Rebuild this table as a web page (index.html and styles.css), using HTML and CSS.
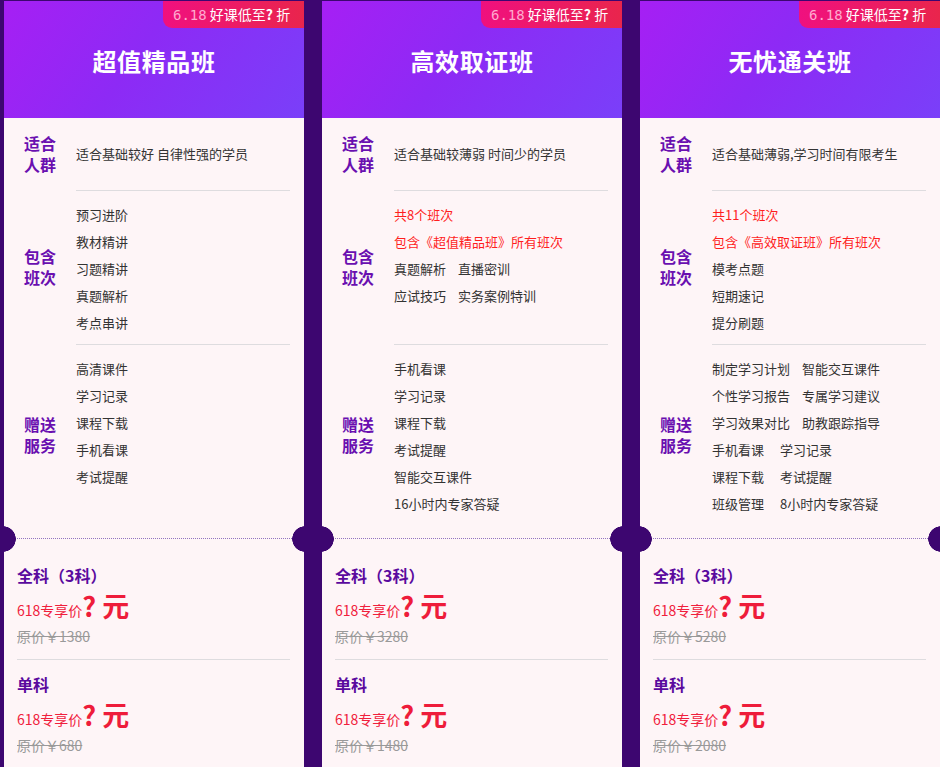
FILE: index.html
```html
<!DOCTYPE html>
<html lang="zh-CN">
<head>
<meta charset="utf-8">
<title>618 班型</title>
<link rel="stylesheet" href="styles.css">
</head>
<body>
<div class="page">
  <div class="card">
    <div class="head">
      <span class="badge"><span class="num">6.18</span> 好课低至<b>?</b> 折</span>
      <h2 class="title">超值精品班</h2>
    </div>
    <div class="info">
      <div class="row r1">
        <div class="label"><span class="ln">适合</span><span class="ln">人群</span></div>
        <div class="content"><p class="item">适合基础较好 自律性强的学员</p></div>
      </div>
      <div class="row r2">
        <div class="label"><span class="ln">包含</span><span class="ln">班次</span></div>
        <div class="content lined">
          <p class="item">预习进阶</p>
          <p class="item">教材精讲</p>
          <p class="item">习题精讲</p>
          <p class="item">真题解析</p>
          <p class="item">考点串讲</p>
        </div>
      </div>
      <div class="row r3">
        <div class="label"><span class="ln">赠送</span><span class="ln">服务</span></div>
        <div class="content lined">
          <p class="item">高清课件</p>
          <p class="item">学习记录</p>
          <p class="item">课程下载</p>
          <p class="item">手机看课</p>
          <p class="item">考试提醒</p>
        </div>
      </div>
    </div>
    <div class="cut"></div>
    <div class="prices">
      <div class="price">
        <div class="ptitle">全科（3科）</div>
        <div class="pnow">618专享价<b class="big">? 元</b></div>
        <div class="pold">原价￥1380</div>
      </div>
      <div class="price">
        <div class="ptitle">单科</div>
        <div class="pnow">618专享价<b class="big">? 元</b></div>
        <div class="pold">原价￥680</div>
      </div>
    </div>
  </div>

  <div class="card">
    <div class="head">
      <span class="badge"><span class="num">6.18</span> 好课低至<b>?</b> 折</span>
      <h2 class="title">高效取证班</h2>
    </div>
    <div class="info">
      <div class="row r1">
        <div class="label"><span class="ln">适合</span><span class="ln">人群</span></div>
        <div class="content"><p class="item">适合基础较薄弱 时间少的学员</p></div>
      </div>
      <div class="row r2">
        <div class="label"><span class="ln">包含</span><span class="ln">班次</span></div>
        <div class="content lined">
          <p class="item red">共8个班次</p>
          <p class="item red">包含《超值精品班》所有班次</p>
          <p class="item"><span class="sp">真题解析</span>直播密训</p>
          <p class="item"><span class="sp">应试技巧</span>实务案例特训</p>
        </div>
      </div>
      <div class="row r3">
        <div class="label"><span class="ln">赠送</span><span class="ln">服务</span></div>
        <div class="content lined">
          <p class="item">手机看课</p>
          <p class="item">学习记录</p>
          <p class="item">课程下载</p>
          <p class="item">考试提醒</p>
          <p class="item">智能交互课件</p>
          <p class="item">16小时内专家答疑</p>
        </div>
      </div>
    </div>
    <div class="cut"></div>
    <div class="prices">
      <div class="price">
        <div class="ptitle">全科（3科）</div>
        <div class="pnow">618专享价<b class="big">? 元</b></div>
        <div class="pold">原价￥3280</div>
      </div>
      <div class="price">
        <div class="ptitle">单科</div>
        <div class="pnow">618专享价<b class="big">? 元</b></div>
        <div class="pold">原价￥1480</div>
      </div>
    </div>
  </div>

  <div class="card">
    <div class="head">
      <span class="badge"><span class="num">6.18</span> 好课低至<b>?</b> 折</span>
      <h2 class="title">无忧通关班</h2>
    </div>
    <div class="info">
      <div class="row r1">
        <div class="label"><span class="ln">适合</span><span class="ln">人群</span></div>
        <div class="content"><p class="item">适合基础薄弱,学习时间有限考生</p></div>
      </div>
      <div class="row r2">
        <div class="label"><span class="ln">包含</span><span class="ln">班次</span></div>
        <div class="content lined">
          <p class="item red">共11个班次</p>
          <p class="item red">包含《高效取证班》所有班次</p>
          <p class="item">模考点题</p>
          <p class="item">短期速记</p>
          <p class="item">提分刷题</p>
        </div>
      </div>
      <div class="row r3">
        <div class="label"><span class="ln">赠送</span><span class="ln">服务</span></div>
        <div class="content lined">
          <p class="item"><span class="sp">制定学习计划</span>智能交互课件</p>
          <p class="item"><span class="sp">个性学习报告</span>专属学习建议</p>
          <p class="item"><span class="sp">学习效果对比</span>助教跟踪指导</p>
          <p class="item"><span class="sp wide">手机看课</span>学习记录</p>
          <p class="item"><span class="sp wide">课程下载</span>考试提醒</p>
          <p class="item"><span class="sp wide">班级管理</span>8小时内专家答疑</p>
        </div>
      </div>
    </div>
    <div class="cut"></div>
    <div class="prices">
      <div class="price">
        <div class="ptitle">全科（3科）</div>
        <div class="pnow">618专享价<b class="big">? 元</b></div>
        <div class="pold">原价￥5280</div>
      </div>
      <div class="price">
        <div class="ptitle">单科</div>
        <div class="pnow">618专享价<b class="big">? 元</b></div>
        <div class="pold">原价￥2080</div>
      </div>
    </div>
  </div>
</div>
</body>
</html>
```

FILE: styles.css
```css
* { box-sizing: border-box; }
html, body { margin: 0; padding: 0; }
body {
  background: #3d0670;
  font-family: "Noto Sans CJK SC", "Noto Sans", sans-serif;
  color: #333;
  overflow: hidden;
}
.page {
  display: flex;
  gap: 18px;
  padding: 1px 0 0 4px;
  width: 940px;
  height: 767px;
  overflow: hidden;
  align-items: flex-start;
}
.card {
  position: relative;
  flex: 0 0 300px;
  width: 300px;
  background: #fef5f7;
}
.head {
  position: relative;
  height: 117px;
  background: linear-gradient(125deg, #a61ff4 0%, #8d2af5 45%, #7a3ff9 100%);
  display: flex;
  align-items: center;
  justify-content: center;
}
.title {
  margin: 0;
  color: #fff;
  font-size: 24px;
  font-weight: 700;
  letter-spacing: 0.6px;
  line-height: 32px;
  padding-top: 2px;
}
.badge {
  position: absolute;
  top: 0;
  right: 0;
  height: 27px;
  padding: 0 8px 0 10px;
  width: 141px;
  background: linear-gradient(90deg, #f0107f 0%, #e9254c 100%);
  border-bottom-left-radius: 9px;
  color: #fff;
  font-size: 14px;
  line-height: 27px;
  white-space: nowrap;
}
.badge .num {
  font-family: "DejaVu Sans Mono", monospace;
  color: #ffa9cf;
  font-size: 14px;
}
.badge b { font-weight: 700; }
.info { padding: 0 14px 0 0; }
.row { display: flex; }
.label {
  flex: 0 0 72px;
  padding-left: 20px;
  align-self: center;
  color: #6a0fb0;
  font-size: 16px;
  font-weight: 700;
  display: flex;
  flex-direction: column;
}
.label .ln {
  display: block;
  height: 21px;
  line-height: 21px;
  overflow: visible;
}
.content { flex: 1; }
.content.lined { border-top: 1px solid #dedcdf; }
.r1 { height: 72px; }
.r1 .content { align-self: center; }
.r2 { height: 154px; }
.r2 .content { padding-top: 10px; }
.r3 { height: 182px; }
.r3 .content { padding-top: 10px; }
.item {
  margin: 0;
  font-size: 13px;
  line-height: 27px;
  color: #333;
  white-space: nowrap;
}
.r1 .item { line-height: 20px; }
.item.red { color: #ff1e1e; }
.sp { margin-right: 12px; }
.sp.wide { margin-right: 16px; }
.cut {
  position: relative;
  height: 26px;
}
.cut::before {
  content: "";
  position: absolute;
  left: 0;
  right: 0;
  top: 12px;
  border-top: 1px dotted #9274c0;
}
.cut::after {
  content: "";
  position: absolute;
  left: -14px;
  right: -14px;
  top: 0;
  height: 26px;
  background:
    radial-gradient(circle at 13px 13px, #3d0670 12.5px, transparent 13px) left top / 26px 26px no-repeat,
    radial-gradient(circle at 13px 13px, #3d0670 12.5px, transparent 13px) right top / 26px 26px no-repeat;
}
.prices { padding: 0 14px 0 13px; }
.price { padding: 11px 0 12px; }
.price + .price { border-top: 1px solid #dedcdf; padding-top: 12px; }
.ptitle {
  color: #5a0a9e;
  font-size: 16px;
  font-weight: 700;
  line-height: 24px;
}
.pnow {
  color: #f0203c;
  font-size: 14px;
  line-height: 38px;
  height: 38px;
  white-space: nowrap;
}
.big {
  font-size: 27px;
  font-weight: 700;
  color: #ee1c3a;
  vertical-align: -1px;
}
.pold {
  color: #999;
  font-size: 14px;
  line-height: 22px;
  text-decoration: line-through;
}
```
